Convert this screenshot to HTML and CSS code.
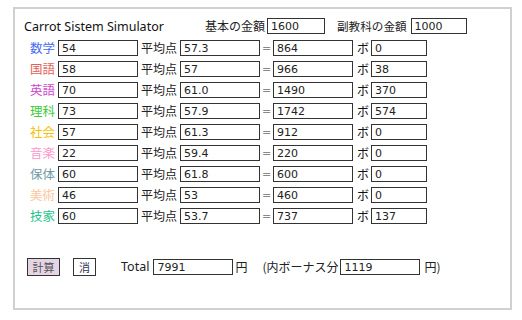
FILE: index.html
```html
<!DOCTYPE html>
<html lang="ja">
<head>
<meta charset="utf-8">
<link rel="stylesheet" href="styles.css">
</head>
<body>
<div class="panel">
  <div class="head">
    <span class="title">Carrot Sistem Simulator</span>
    <span class="lbl base-lbl">基本の金額</span>
    <input class="box w58" value="1600">
    <span class="lbl sub-lbl">副教科の金額</span>
    <input class="box w56" value="1000">
  </div>
  <div class="rows">
    <div class="row"><span class="subj c1">数学</span><input class="box w80" value="54"><span class="lbl avg">平均点</span><input class="box w80" value="57.3"><span class="eq">=</span><input class="box w80" value="864"><span class="lbl bo">ボ</span><input class="box w56" value="0"></div>
    <div class="row"><span class="subj c2">国語</span><input class="box w80" value="58"><span class="lbl avg">平均点</span><input class="box w80" value="57"><span class="eq">=</span><input class="box w80" value="966"><span class="lbl bo">ボ</span><input class="box w56" value="38"></div>
    <div class="row"><span class="subj c3">英語</span><input class="box w80" value="70"><span class="lbl avg">平均点</span><input class="box w80" value="61.0"><span class="eq">=</span><input class="box w80" value="1490"><span class="lbl bo">ボ</span><input class="box w56" value="370"></div>
    <div class="row"><span class="subj c4">理科</span><input class="box w80" value="73"><span class="lbl avg">平均点</span><input class="box w80" value="57.9"><span class="eq">=</span><input class="box w80" value="1742"><span class="lbl bo">ボ</span><input class="box w56" value="574"></div>
    <div class="row"><span class="subj c5">社会</span><input class="box w80" value="57"><span class="lbl avg">平均点</span><input class="box w80" value="61.3"><span class="eq">=</span><input class="box w80" value="912"><span class="lbl bo">ボ</span><input class="box w56" value="0"></div>
    <div class="row"><span class="subj c6">音楽</span><input class="box w80" value="22"><span class="lbl avg">平均点</span><input class="box w80" value="59.4"><span class="eq">=</span><input class="box w80" value="220"><span class="lbl bo">ボ</span><input class="box w56" value="0"></div>
    <div class="row"><span class="subj c7">保体</span><input class="box w80" value="60"><span class="lbl avg">平均点</span><input class="box w80" value="61.8"><span class="eq">=</span><input class="box w80" value="600"><span class="lbl bo">ボ</span><input class="box w56" value="0"></div>
    <div class="row"><span class="subj c8">美術</span><input class="box w80" value="46"><span class="lbl avg">平均点</span><input class="box w80" value="53"><span class="eq">=</span><input class="box w80" value="460"><span class="lbl bo">ボ</span><input class="box w56" value="0"></div>
    <div class="row"><span class="subj c9">技家</span><input class="box w80" value="60"><span class="lbl avg">平均点</span><input class="box w80" value="53.7"><span class="eq">=</span><input class="box w80" value="737"><span class="lbl bo">ボ</span><input class="box w56" value="137"></div>
  </div>
  <div class="foot">
    <button class="btn calc">計算</button>
    <button class="btn clear">消</button>
    <span class="lbl total">Total</span>
    <input class="box w80" value="7991">
    <span class="lbl yen">円</span>
    <span class="lbl inner">(内ボーナス分</span>
    <input class="box w80" value="1119">
    <span class="lbl yen2">円)</span>
  </div>
</div>
</body>
</html>
```
FILE: styles.css
```css
html, body {
  margin: 0;
  padding: 0;
  background: #fff;
}
body {
  font-family: "Noto Sans CJK JP", "Noto Sans", sans-serif;
  font-size: 12px;
  color: #222;
}
.panel {
  box-sizing: border-box;
  margin: 7px 0 0 13px;
  width: 499px;
  height: 303px;
  border: 2px solid #d0d0d0;
  padding: 9px 0 0 0;
}
.head {
  display: flex;
  align-items: center;
  height: 16px;
  padding-left: 9px;
}
.title {
  font-family: "Noto Sans", sans-serif;
  font-size: 12.5px;
  color: #111;
  width: 181px;
}
.lbl {
  line-height: 16px;
  white-space: nowrap;
}
.base-lbl { margin-right: 2px; }
.sub-lbl { margin-left: 12px; margin-right: 4px; font-size: 11.6px; }
.box {
  box-sizing: border-box;
  height: 16px;
  border: 1px solid #333;
  padding: 0 0 0 3px;
  margin: 0;
  font-family: "DejaVu Sans", sans-serif;
  font-size: 11px;
  color: #222;
  background: #fff;
  outline: none;
}
.w80 { width: 80px; }
.w58 { width: 58px; }
.w56 { width: 56px; }
.rows {
  display: flex;
  flex-direction: column;
  gap: 5px;
  margin-top: 6px;
  padding-left: 15px;
}
.row {
  display: flex;
  align-items: center;
  height: 16px;
}
.subj {
  width: 28px;
  font-size: 12.5px;
  line-height: 16px;
}
.avg { margin: 0 3px 0 3px; }
.eq {
  color: #888;
  font-family: "DejaVu Sans", sans-serif;
  font-size: 11px;
  width: 13px;
  text-align: center;
}
.bo { margin: 0 2px 0 4px; color: #111; }
.c1 { color: #4a6cf0; }
.c2 { color: #e2605a; }
.c3 { color: #cc44cc; }
.c4 { color: #3ccc3c; }
.c5 { color: #f5c000; }
.c6 { color: #ff99cc; }
.c7 { color: #6f9aa8; }
.c8 { color: #ffc499; }
.c9 { color: #1cc48a; }
.foot {
  display: flex;
  align-items: center;
  margin-top: 34px;
  padding-left: 12px;
  height: 18px;
}
.btn {
  box-sizing: border-box;
  height: 18px;
  border: 1px solid #333;
  padding: 0;
  margin: 0;
  font-family: "Noto Sans CJK JP", sans-serif;
  font-size: 11px;
  line-height: 16px;
  color: #555;
  background: #fff;
}
.calc { width: 33px; background: #e4d4e4; }
.clear { width: 23px; margin-left: 13px; color: #335; }
.total {
  font-family: "Noto Sans", sans-serif;
  font-size: 12.5px;
  margin-left: 25px;
  margin-right: 4px;
}
.yen { margin-left: 2px; margin-right: 15px; }
.inner { margin-right: 2px; }
.yen2 { margin-left: 4px; }
```
